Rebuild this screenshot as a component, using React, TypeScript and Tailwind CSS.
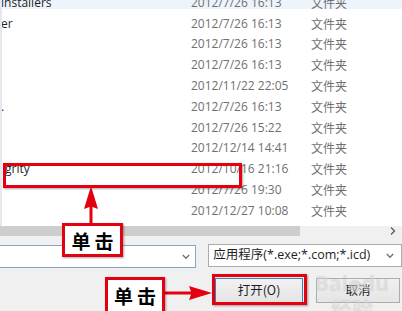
import React from "react";

const rows = [
  { name: "uninstallers", date: "2012/7/26 16:13", hl: true },
  { name: "er", date: "2012/7/26 16:13" },
  { name: "", date: "2012/7/26 16:13" },
  { name: "", date: "2012/7/26 16:13" },
  { name: "", date: "2012/11/22 22:05" },
  { name: ".", date: "2012/7/26 16:13" },
  { name: "", date: "2012/7/26 15:22" },
  { name: "", date: "2012/12/14 14:41" },
  { name: "grity", date: "2012/10/16 21:16" },
  { name: "", date: "2012/7/26 19:30" },
  { name: "", date: "2012/12/27 10:08" },
];

const latin = "font-['Open_Sans','Noto_Sans_CJK_SC',sans-serif]";
const cjk = "font-['Noto_Sans_CJK_SC','Noto_Sans',sans-serif]";

export default function App() {
  return (
    <div className="relative w-[402px] h-[311px] overflow-hidden bg-[#f0f0f0]">
      <div className="flex flex-col w-full h-full">
        {/* list */}
        <div className="h-[226px] bg-white border-l-2 border-[#e4e9ef] overflow-hidden">
          <div className="flex flex-col mt-[-7.6px]">
            {rows.map((r, i) => (
              <div
                key={i}
                className={`flex items-center h-[20.8px] text-[12px] ${latin} ${
                  r.hl ? "bg-[linear-gradient(to_bottom,#edf4fc_16.6px,transparent_16.6px)]" : ""
                }`}
              >
                <div className={`w-[189px] shrink-0 text-[#1e1e1e] ${i === 0 ? "-ml-[4px]" : i === 8 ? "ml-[3px]" : "-ml-[1px]"}`}>
                  {i === 0 ? "ıinstallers" : r.name}
                </div>
                <div className={`w-[120px] shrink-0 text-[#707070] ${i === 0 ? "ml-[4px]" : i === 8 ? "-ml-[3px]" : "ml-[1px]"}`}>
                  {r.date}
                </div>
                <div className={`text-[#707070] ${cjk}`}>文件夹</div>
              </div>
            ))}
          </div>
        </div>
        {/* horizontal scrollbar */}
        <div className="h-[10px] flex items-stretch">
          <div className="w-[300px] bg-[#cdcdcd]" />
          <div className="flex-1 bg-[#f0f0f0] flex items-center justify-end pr-[6px]">
            <svg width="6" height="8" viewBox="0 0 6 8">
              <path d="M1 0.5 L4.5 4 L1 7.5" stroke="#606060" strokeWidth="1.4" fill="none" />
            </svg>
          </div>
        </div>
        {/* inputs */}
        <div className="flex items-start mt-[9px]">
          <div className="-ml-[2px] w-[205px] h-[23px] bg-white border border-[#8aa6c6] flex items-center justify-end pr-[5px]">
            <svg width="8" height="6" viewBox="0 0 8 6">
              <path d="M0.8 1 L4 4.3 L7.2 1" stroke="#707070" strokeWidth="1.3" fill="none" />
            </svg>
          </div>
          <div className={`ml-[12px] w-[200px] h-[23px] -mt-[1px] bg-white border border-[#acacac] flex items-center pl-[4px] pr-[6px] text-[12.5px] text-[#1e1e1e] ${latin}`}>
            <span className="flex-1 whitespace-nowrap">应用程序(*.exe;*.com;*.icd)</span>
            <svg width="8" height="6" viewBox="0 0 8 6" className="mr-[1px]">
              <path d="M0.8 1 L4 4.3 L7.2 1" stroke="#707070" strokeWidth="1.3" fill="none" />
            </svg>
          </div>
        </div>
        {/* buttons */}
        <div className="flex mt-[10px] pl-[215px]">
          <div className={`w-[88px] h-[25px] border border-[#3c7fb1] bg-[linear-gradient(#f2f2f2,#e4e4e4)] flex items-center justify-center text-[12.5px] text-[#1e1e1e] ${cjk}`}>
            打开(O)
          </div>
          <div className={`ml-[13px] w-[84px] h-[25px] border border-[#acacac] bg-[linear-gradient(#f0f0f0,#e5e5e5)] flex items-center justify-center text-[12.5px] text-[#1e1e1e] ${cjk}`}>
            取消
          </div>
        </div>
      </div>

      {/* watermark */}
      <div className="absolute left-[302px] top-[272px] pointer-events-none select-none text-center">
        <div className={`text-[21px] leading-[22px] font-bold text-white/30 [text-shadow:0_0_1px_rgba(170,170,170,0.45)] ${latin}`}>
          Bai<span className="text-[14px]">●</span>du <span className={cjk}>经验</span>
        </div>
        <div className={`text-[9px] leading-[11px] text-[#c0c0c0]/50 ${latin}`}>jingyan.baidu.com</div>
      </div>

      {/* red box around row */}
      <div className="absolute left-[3px] top-[163px] w-[239px] h-[25px] border-[3px] border-[#e5000f] shadow-[1px_1px_2px_rgba(0,0,0,0.35)]" />
      {/* red box around open button */}
      <div className="absolute left-[212px] top-[274px] w-[95px] h-[31px] border-[3px] border-[#e5000f] shadow-[1px_1px_2px_rgba(0,0,0,0.35)]" />

      {/* arrow up */}
      <svg className="absolute left-[81px] top-[186px]" width="20" height="40" viewBox="0 0 20 40">
        <path d="M10 0 L17 23 L11.5 21 L11.5 40 L8.5 40 L8.5 21 L3 23 Z" fill="#e5000f" />
      </svg>
      {/* arrow right */}
      <svg className="absolute left-[164px] top-[283px]" width="50" height="20" viewBox="0 0 50 20">
        <path d="M48 10 L25 3 L27 8.5 L0 8.5 L0 11.5 L27 11.5 L25 17 Z" fill="#e5000f" />
      </svg>

      {/* labels */}
      <div className={`absolute left-[62px] top-[223px] w-[61px] h-[34px] bg-white border-[3px] border-[#e5000f] shadow-[1px_1px_2px_rgba(0,0,0,0.35)] flex items-center justify-center text-[19px] leading-none font-bold tracking-[4px] pl-[4px] text-black ${cjk}`}>
        单击
      </div>
      <div className={`absolute left-[105px] top-[277px] w-[60px] h-[40px] bg-white border-[3px] border-[#e5000f] shadow-[1px_1px_2px_rgba(0,0,0,0.35)] flex items-start pt-[6px] justify-center text-[19px] leading-none font-bold tracking-[4px] pl-[4px] text-black ${cjk}`}>
        单击
      </div>
    </div>
  );
}
